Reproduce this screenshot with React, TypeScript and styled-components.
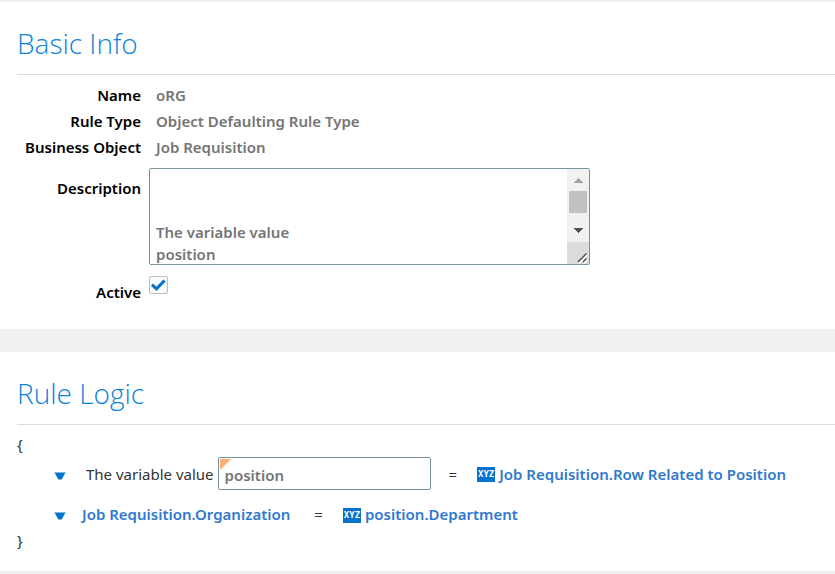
import React from "react";
import styled, { createGlobalStyle } from "styled-components";

const GlobalStyle = createGlobalStyle`
  *, *::before, *::after { box-sizing: border-box; }
  body {
    margin: 0;
    background: #ffffff;
    color: #333333;
    font: 400 15px/26px "Noto Sans", "Open Sans", sans-serif;
  }
`;

const Page = styled.main`
  display: flex;
  flex-direction: column;
  border-top: 2px solid #f0f0f0;
`;

const Section = styled.section<{ $bottomGap: number; $bottomBand: number }>`
  padding: 19px 0 ${(p) => p.$bottomGap}px 17px;
  border-bottom: ${(p) => p.$bottomBand}px solid #f0f0f0;
`;

const Title = styled.h2`
  margin: 0;
  padding-bottom: 9px;
  border-bottom: 1px solid #d3dfe7;
  color: #0b83d9;
  font-family: "Open Sans", "Noto Sans", sans-serif;
  font-size: 28px;
  font-weight: 300;
  line-height: 44px;
`;

const Fields = styled.div`
  display: grid;
  grid-template-columns: 124px minmax(0, 1fr);
  column-gap: 8px;
  padding-top: 7px;
  font-weight: 600;
`;

const Label = styled.label<{ $drop?: number }>`
  padding-top: ${(p) => p.$drop ?? 0}px;
  color: #000000;
  text-align: right;
  white-space: nowrap;
`;

const Value = styled.output`
  padding-left: 7px;
  color: #757575;
`;

const AreaFrame = styled.div`
  display: flex;
  width: 100%;
  max-width: 441px;
  height: 97px;
  margin: 8px 0 11px;
  border: 1px solid #7b929e;
  border-radius: 2px;
  overflow: hidden;
`;

const Area = styled.textarea`
  flex: 1;
  min-width: 0;
  padding: 8px 6px 0;
  border: 0;
  outline: 0;
  resize: none;
  overflow: hidden;
  background: #ffffff;
  color: #757575;
  font: inherit;
  line-height: 22px;
`;

const ScrollTrack = styled.div`
  display: flex;
  flex-direction: column;
  width: 22px;
  background: #f1f1f1;
`;

const ScrollButton = styled.button`
  display: block;
  height: 22px;
  padding: 0;
  border: 0;
  background: #f1f1f1;
  line-height: 0;
`;

const ScrollThumb = styled.div`
  height: 22px;
  margin: 0 2px 7px;
  background: #c1c1c1;
`;

const ResizeCorner = styled.div`
  flex: 1;
  background: #dcdcdc;
  line-height: 0;
`;

const CheckHolder = styled.span`
  display: grid;
  width: 19px;
  height: 18px;
`;

const CheckInput = styled.input`
  grid-area: 1 / 1;
  width: 19px;
  height: 18px;
  margin: 0;
  appearance: none;
  border: 1px solid #b4c2cc;
  border-radius: 2px;
  background: #fbfcfd;
`;

const CheckMark = styled.svg`
  grid-area: 1 / 1;
  visibility: hidden;
  pointer-events: none;
  ${CheckInput}:checked + & { visibility: visible; }
`;

const Brace = styled.div<{ $gap?: number }>`
  padding-top: ${(p) => p.$gap ?? 0}px;
  line-height: 26px;
`;

const RuleRow = styled.div<{ $gap?: number }>`
  display: flex;
  align-items: center;
  margin-top: ${(p) => p.$gap ?? 0}px;
  padding-left: 37px;
  white-space: nowrap;
`;

const MenuButton = styled.button<{ $gap: number }>`
  width: 12px;
  height: 12px;
  margin: 4px ${(p) => p.$gap}px 0 0;
  padding: 0;
  border: 0;
  background: none;
  line-height: 0;
`;

const VariableBox = styled.span`
  position: relative;
  flex: 0 1 213px;
  height: 33px;
  margin: 0 18px 0 4px;

  &::before {
    content: "";
    position: absolute;
    top: 2px;
    left: 2px;
    border-top: 11px solid #ffad75;
    border-right: 11px solid transparent;
  }
`;

const VariableInput = styled.input`
  display: block;
  width: 100%;
  height: 100%;
  padding: 3px 6px 0;
  border: 1px solid #7b929e;
  border-radius: 2px;
  background: #ffffff;
  color: #757575;
  font: inherit;
  font-weight: 600;
`;

const Equals = styled.span`
  margin-right: 20px;
`;

const RuleLink = styled.a<{ $gap?: number }>`
  display: inline-flex;
  align-items: center;
  gap: 4px;
  margin-right: ${(p) => p.$gap ?? 0}px;
  color: #3179cd;
  font-weight: 600;
  text-decoration: none;
`;

const VariableBadge = styled.span`
  width: 18px;
  height: 15px;
  margin-top: 2px;
  overflow: hidden;
  background: #0572ce;
  color: #ffffff;
  font: 700 9px/15px "DejaVu Sans Mono", monospace;
  text-align: center;
`;

const MenuArrow = () => (
  <svg width="12" height="12" viewBox="0 0 12 12" aria-hidden="true">
    <path d="M.5 2.5h11L7.7 9.5H4.3z" fill="#0572ce" />
  </svg>
);

export default function App() {
  return (
    <>
      <GlobalStyle />
      <Page>
        <Section $bottomGap={24} $bottomBand={23}>
          <Title>Basic Info</Title>
          <Fields>
            <Label htmlFor="name">Name</Label>
            <Value id="name">oRG</Value>
            <Label htmlFor="type">Rule Type</Label>
            <Value id="type">Object Defaulting Rule Type</Value>
            <Label htmlFor="object">Business Object</Label>
            <Value id="object">Job Requisition</Value>
            <Label htmlFor="description" $drop={15}>Description</Label>
            <AreaFrame>
              <Area
                id="description"
                defaultValue={"\n\nThe variable value\nposition"}
              />
              <ScrollTrack>
                <ScrollButton type="button" aria-label="Scroll up">
                  <svg width="22" height="22" shapeRendering="crispEdges">
                    <path d="M6 14l5-5 5 5z" fill="#a3a3a3" />
                  </svg>
                </ScrollButton>
                <ScrollThumb />
                <ScrollButton type="button" aria-label="Scroll down">
                  <svg width="22" height="22" shapeRendering="crispEdges">
                    <path d="M6 8h10l-5 5z" fill="#505050" />
                  </svg>
                </ScrollButton>
                <ResizeCorner>
                  <svg width="22" height="22" aria-hidden="true">
                    <path d="M12 21l8-8M17 21l3-3" stroke="#fff" strokeWidth="2" />
                    <path d="M11 20l8.5-8.5M16 20l3.5-3.5" stroke="#474750" strokeWidth="1.4" />
                  </svg>
                </ResizeCorner>
              </ScrollTrack>
            </AreaFrame>
            <Label htmlFor="active" $drop={3}>Active</Label>
            <CheckHolder>
              <CheckInput id="active" type="checkbox" defaultChecked />
              <CheckMark width="19" height="18" aria-hidden="true">
                <path d="M3 8.7l4.5 4.2 8-8.4" fill="none" stroke="#0572ce" strokeWidth="3" />
              </CheckMark>
            </CheckHolder>
          </Fields>
        </Section>
        <Section $bottomGap={18} $bottomBand={3}>
          <Title>Rule Logic</Title>
          <Brace $gap={6}>{"{"}</Brace>
          <RuleRow>
            <MenuButton $gap={20} type="button" aria-label="Variable options">
              <MenuArrow />
            </MenuButton>
            <label htmlFor="variable">The variable value</label>
            <VariableBox>
              <VariableInput id="variable" type="text" defaultValue="position" />
            </VariableBox>
            <Equals>=</Equals>
            <RuleLink href="#row">
              <VariableBadge>XYZ</VariableBadge>
              Job Requisition.Row Related to Position
            </RuleLink>
          </RuleRow>
          <RuleRow $gap={11}>
            <MenuButton $gap={16} type="button" aria-label="Assignment options">
              <MenuArrow />
            </MenuButton>
            <RuleLink href="#organization" $gap={24}>
              Job Requisition.Organization
            </RuleLink>
            <Equals>=</Equals>
            <RuleLink href="#department">
              <VariableBadge>XYZ</VariableBadge>
              position.Department
            </RuleLink>
          </RuleRow>
          <Brace>{"}"}</Brace>
        </Section>
      </Page>
    </>
  );
}
